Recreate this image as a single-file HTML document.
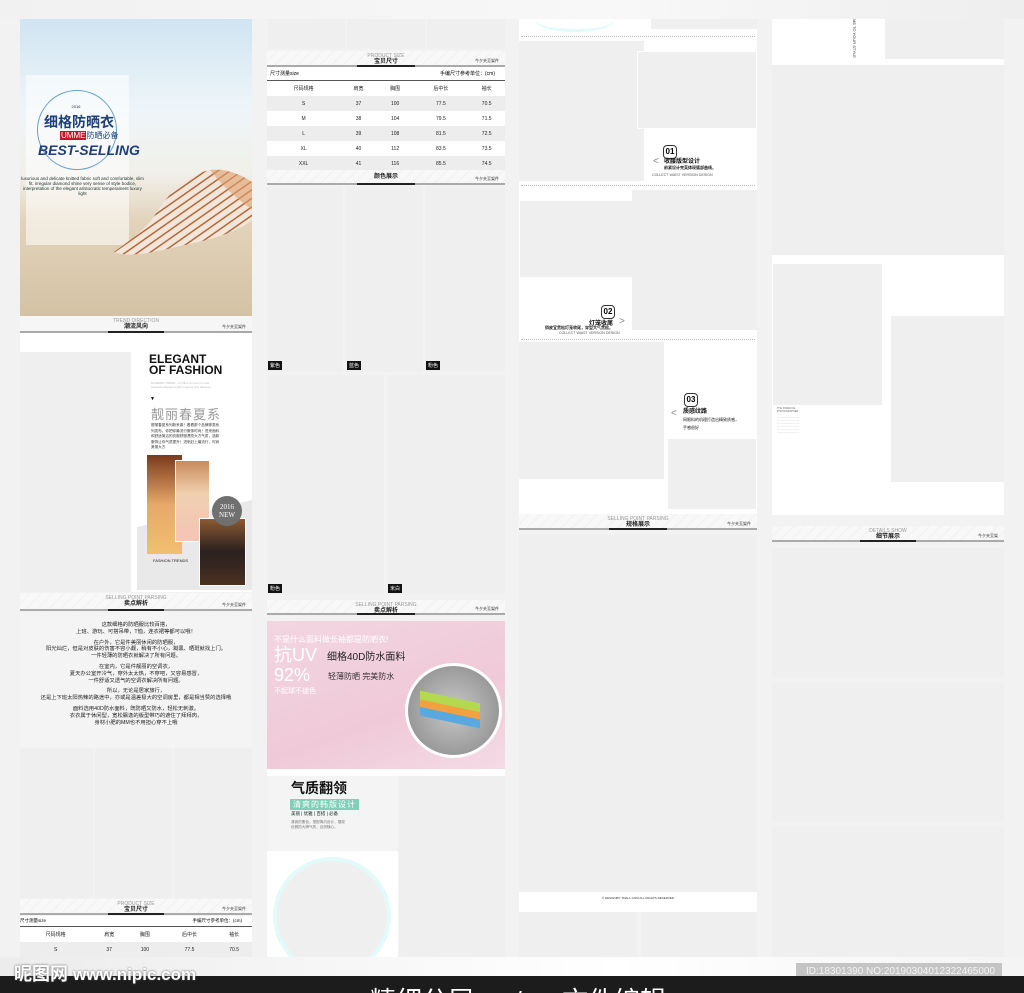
<!DOCTYPE html>
<html><head><meta charset="utf-8"><style>
*{margin:0;padding:0;box-sizing:border-box}
body{width:1024px;height:993px;overflow:hidden;background:#f2f2f2;font-family:"Liberation Sans","Noto Sans CJK SC",sans-serif;position:relative}
.a{position:absolute}
.g{position:absolute;background:#efefef}
.w{position:absolute;background:#fff}
.hd{position:absolute;height:16px;background:repeating-linear-gradient(135deg,#f8f8f8 0 7px,#f1f1f1 7px 8px);border-bottom:2px solid #aaa;text-align:center;font-size:5px;color:#999;line-height:6px;padding-top:2px}
.hd b{display:block;color:#222;font-size:6px;line-height:7px}
.hd i{position:absolute;bottom:-2px;left:38%;width:24%;height:2px;background:#222}
.hd s{position:absolute;right:6px;bottom:1px;font-size:4px;color:#333;text-decoration:none}
table{border-collapse:collapse;width:100%;font-size:5px;color:#222}
td{text-align:center;height:15px}
tr.s td{background:#ededed}
.lab{position:absolute;bottom:2px;left:1px;background:#111;color:#fff;font-size:5px;padding:1px 2px}
.dot{position:absolute;border-top:1px dotted #bbb;height:0}
.hex{font-size:8px;font-weight:bold;border:1px solid #333;border-radius:4px;width:14px;height:14px;text-align:center;line-height:12px}
</style></head><body>
<div class="a" style="left:0;top:0;width:1024px;height:19px;background:linear-gradient(90deg,#f1f1f1,#f8f8f8 60%,#eee)"></div>

<!-- COL 1 -->
<div class="a" style="left:20px;top:19px;width:232px;height:297px;background:linear-gradient(180deg,#cfe4f1 0%,#eef5f9 30%,#f1f0ea 52%,#e2d3bb 68%,#d4c2a4 100%)"></div>
<div class="a" style="left:26px;top:75px;width:103px;height:170px;background:rgba(255,255,255,.55)"></div>
<div class="a" style="left:37px;top:90px;width:80px;height:80px;border:1px solid #6aa0cc;border-radius:50%"></div>
<div class="a" style="left:20px;top:104px;width:112px;text-align:center;font-size:4px;color:#234">2016</div>
<div class="a" style="left:44px;top:112px;font-size:14px;color:#1d3f7a;font-weight:bold">细格防晒衣</div>
<div class="a" style="left:60px;top:130px;font-size:8px;color:#1d3f7a"><span style="background:#c01826;color:#fff;padding:0 1px">UMME</span>防晒必备</div>
<div class="a" style="left:38px;top:142px;font-size:14px;color:#1d3f7a;font-style:italic;font-weight:bold">BEST-SELLING</div>
<div class="a" style="left:20px;top:176px;width:125px;font-size:4.5px;color:#233;line-height:5px;text-align:center">luxurious and delicate knitted fabric soft and comfortable, slim fit, irregular diamond shine very sense of style bodice, interpretation of the elegant aristocratic temperament luxury light</div>
<svg class="a" style="left:110px;top:160px" width="142" height="100" viewBox="0 0 142 100">
<defs><pattern id="st" width="7" height="7" patternUnits="userSpaceOnUse" patternTransform="rotate(55)"><rect width="7" height="7" fill="#f3e6d8"/><rect width="1.5" height="7" fill="#b0683e"/></pattern></defs>
<path d="M4 92 C20 80 35 70 45 55 C60 30 80 14 100 10 C115 8 130 14 142 22 L142 60 C128 72 100 80 70 86 C45 92 20 98 4 92 Z" fill="url(#st)"/>
<path d="M100 10 C115 8 130 14 142 22 L142 50 C130 40 115 30 100 10Z" fill="#e0a070" opacity=".6"/>
</svg>
<div class="hd" style="left:20px;top:316px;width:232px;height:17px;background:#f6f6f6">TREND DIRECTION<b>潮流风向</b><i></i><s>今夕夫至架件</s></div>
<div class="w" style="left:20px;top:333px;width:232px;height:19px"></div>
<div class="w" style="left:20px;top:352px;width:232px;height:240px"></div>
<div class="g" style="left:20px;top:352px;width:111px;height:240px"></div>
<div class="a" style="left:149px;top:354px;font-size:12px;font-weight:bold;line-height:11px;color:#111">ELEGANT<br>OF FASHION</div>
<div class="a" style="left:151px;top:381px;width:70px;font-size:3px;color:#bbb;line-height:4px">MODERN TREND · A Office for men of new products designed with superior fine tailoring</div>
<div class="a" style="left:150px;top:396px;font-size:5px">▼</div>
<div class="a" style="left:151px;top:404px;font-size:13px;color:#999;letter-spacing:1px">靓丽春夏系</div>
<div class="a" style="left:151px;top:423px;width:70px;font-size:3.6px;color:#333;line-height:5.5px">靓丽春夏系列新来袭！看看那个品牌那类系列发布。你把你最流行服饰时尚！进来面料和舒适简洁的衣服舒服漂亮大方气质，选款服饰让你气质提升！进来赶上最流行，时尚美丽大方</div>
<div class="a" style="left:137px;top:500px;width:115px;height:90px;background:#e9e9e9;clip-path:polygon(0 30%,100% 0,100% 100%,0 100%)"></div>
<div class="a" style="left:147px;top:455px;width:35px;height:99px;background:linear-gradient(180deg,#7a3a1c,#e8a86a 50%,#f0c070)"></div>
<div class="a" style="left:175px;top:460px;width:35px;height:82px;background:linear-gradient(180deg,#c88a5a,#f0d0b0 40%,#f4c4b4);border:1px solid #fff"></div>
<div class="a" style="left:199px;top:518px;width:47px;height:68px;background:linear-gradient(180deg,#8a5a30,#2a2020 50%,#4a3020);border:1px solid #fff"></div>
<div class="a" style="left:212px;top:496px;width:30px;height:30px;border-radius:50%;background:#707070;color:#fff;font-size:7px;text-align:center;line-height:8px;padding-top:7px;font-family:'Liberation Serif',serif">2016<br>NEW</div>
<div class="a" style="left:153px;top:558px;font-size:4px;color:#222">FASHION TRENDS</div>
<div class="hd" style="left:20px;top:593px;width:232px;height:18px">SELLING POINT PARSING<b>卖点解析</b><i></i><s>今夕夫至架件</s></div>
<div class="a" style="left:20px;top:612px;width:232px;height:135px;background:#f4f4f4;font-size:5.3px;text-align:center;line-height:6.8px;color:#222;padding-top:10px">这款细格的防晒服比较百搭，<br>上班、游玩、可搭吊带，T恤，连衣裙等都可以哦！<div style="height:4px"></div>在户外，它是件美丽休闲的防晒服，<br>阳光灿烂，但是对皮肤的伤害不容小觑，稍有不小心，黝黑、晒斑就找上门。<br>一件轻薄的防晒衣就解决了所有问题。<div style="height:4px"></div>在室内，它是件靓丽的空调衣，<br>夏天办公室开冷气，穿外太太热，不穿吧，又容易感冒，<br>一件舒适又透气的空调衣解决所有问题。<div style="height:4px"></div>所以，无论是居家旅行，<br>还是上下班太阳热辣的路途中，亦或是温差极大的空调房里，都是相当赞的选择哦<div style="height:4px"></div>面料选用40D防水面料，既防晒又防水，轻松无刺激。<br>衣衣属于休闲型，宽松飘逸的版型带巧的遮住了拜拜肉，<br>身材小肥的MM也不用担心穿不上哦</div>
<div class="g" style="left:20px;top:748px;width:73px;height:150px"></div>
<div class="g" style="left:95px;top:748px;width:77px;height:150px"></div>
<div class="g" style="left:174px;top:748px;width:78px;height:150px"></div>
<div class="hd" style="left:20px;top:899px;width:232px;height:16px">PRODUCT SIZE<b>宝贝尺寸</b><i></i><s>今夕夫至架件</s></div>
<div class="w" style="left:20px;top:916px;width:232px;height:41px;font-size:4.5px">
<div style="display:flex;justify-content:space-between;padding:2px 10px 0 0;height:11px;border-bottom:1px solid #555">尺寸测量size<span>手编尺寸参考单位：(cm)</span></div>
<table><tr><td>尺码规格</td><td>肩宽</td><td>胸围</td><td>后中长</td><td>袖长</td></tr><tr class="s"><td>S</td><td>37</td><td>100</td><td>77.5</td><td>70.5</td></tr></table></div>

<!-- COL 2 -->
<div class="g" style="left:268px;top:19px;width:77px;height:30px"></div>
<div class="g" style="left:347px;top:19px;width:78px;height:30px"></div>
<div class="g" style="left:427px;top:19px;width:78px;height:30px"></div>
<div class="hd" style="left:267px;top:51px;width:238px;height:16px">PRODUCT SIZE<b>宝贝尺寸</b><i></i><s>今夕夫至架件</s></div>
<div class="w" style="left:267px;top:67px;width:238px;height:103px;font-size:5px">
<div style="display:flex;justify-content:space-between;padding:3px 10px 0 3px;height:14px;border-bottom:1px solid #555">尺寸测量size<span>手编尺寸参考单位：(cm)</span></div>
<table><tr><td>尺码规格</td><td>肩宽</td><td>胸围</td><td>后中长</td><td>袖长</td></tr>
<tr class="s"><td>S</td><td>37</td><td>100</td><td>77.5</td><td>70.5</td></tr>
<tr><td>M</td><td>38</td><td>104</td><td>79.5</td><td>71.5</td></tr>
<tr class="s"><td>L</td><td>39</td><td>108</td><td>81.5</td><td>72.5</td></tr>
<tr><td>XL</td><td>40</td><td>112</td><td>83.5</td><td>73.5</td></tr>
<tr class="s"><td>XXL</td><td>41</td><td>116</td><td>85.5</td><td>74.5</td></tr></table>
<div style="text-align:right;padding:3px 3px 0;font-size:4px;font-weight:bold">温馨提示：手编手工测量，因测量方式不同，可能会存在1-3cm误差属正常现象！</div></div>
<div class="hd" style="left:267px;top:170px;width:238px;height:15px;padding-top:4px"><b>颜色展示</b><i></i><s>今夕夫至架件</s></div>
<div class="g" style="left:267px;top:187px;width:76px;height:185px"><span class="lab">紫色</span></div>
<div class="g" style="left:346px;top:187px;width:77px;height:185px"><span class="lab">蓝色</span></div>
<div class="g" style="left:425px;top:187px;width:80px;height:185px"><span class="lab">粉色</span></div>
<div class="g" style="left:267px;top:375px;width:117px;height:220px"><span class="lab">粉色</span></div>
<div class="g" style="left:387px;top:375px;width:118px;height:220px"><span class="lab">米白</span></div>
<div class="hd" style="left:267px;top:600px;width:238px;height:15px">SELLING POINT PARSING<b>卖点解析</b><i></i><s>今夕夫至架件</s></div>
<div class="a" style="left:267px;top:621px;width:238px;height:148px;background:linear-gradient(160deg,#f3d6e2,#efc9d7 60%,#f4dbe5)"></div>
<div class="a" style="left:274px;top:634px;font-size:8px;color:#fff">不是什么面料做长袖都是防晒衣!</div>
<div class="a" style="left:274px;top:645px;font-size:18px;color:#fff;line-height:20px">抗UV<br>92%</div>
<div class="a" style="left:274px;top:686px;font-size:7px;color:#fff">不起球不褪色</div>
<div class="a" style="left:327px;top:648px;font-size:10px;color:#222">细格40D防水面料</div>
<div class="a" style="left:328px;top:671px;font-size:8px;color:#333">轻薄防晒 完美防水</div>
<div class="a" style="left:405px;top:663px;width:97px;height:95px;border-radius:50%;background:radial-gradient(circle,#c8c8c8,#9a9a9a 70%);border:3px solid #fff"></div>
<div class="a" style="left:420px;top:697px;width:60px;height:25px;background:linear-gradient(180deg,#b4d850 0 35%,#f2a040 35% 65%,#5aa8e0 65%);transform:skewY(12deg)"></div>
<div class="w" style="left:267px;top:769px;width:238px;height:7px"></div>
<div class="a" style="left:268px;top:776px;width:130px;height:75px;background:#f4f4f4"></div>
<div class="a" style="left:291px;top:778px;font-size:14px;font-weight:bold;color:#111">气质翻领</div>
<div class="a" style="left:290px;top:799px;font-size:8px;color:#fff;background:#7fd0b8;padding:0 3px;letter-spacing:1px">清爽的韩版设计</div>
<div class="a" style="left:291px;top:811px;font-size:4.5px;color:#222">美丽 | 优雅 | 百搭 | 必备</div>
<div class="a" style="left:291px;top:820px;font-size:3.6px;color:#777;line-height:5px">清爽的素色，搭配简约设计，展现<br>优雅的大牌气质，自然随心。</div>
<div class="w" style="left:267px;top:851px;width:131px;height:106px;overflow:hidden"><div style="position:absolute;left:6px;top:6px;width:118px;height:118px;border-radius:50%;border:4px solid #e2fafa;background:#efefef"></div></div>
<div class="g" style="left:399px;top:776px;width:106px;height:181px"></div>

<!-- COL 3 -->
<div class="w" style="left:519px;top:19px;width:238px;height:495px"></div>
<div class="a" style="left:535px;top:8px;width:80px;height:24px;border-radius:50%;border-bottom:3px solid #e2fafa"></div>
<div class="g" style="left:651px;top:19px;width:106px;height:10px"></div>
<div class="dot" style="left:521px;top:36px;width:234px"></div>
<div class="g" style="left:519px;top:41px;width:125px;height:140px"></div>
<div class="g" style="left:637px;top:51px;width:120px;height:78px;border:1px solid #fff"></div>
<div class="a" style="left:663px;top:145px" ><div class="hex">01</div></div>
<div class="a" style="left:653px;top:156px;font-size:10px;color:#888">&lt;</div>
<div class="a" style="left:664px;top:159px;font-size:6px;font-weight:bold;color:#111;line-height:6px">收腰版型设计<br><span style="font-size:4px">前紧设计完美体现腰部曲线。</span></div>
<div class="a" style="left:652px;top:173px;font-size:3.6px;color:#555">COLLECT WAIST VERSION DESIGN</div>
<div class="dot" style="left:521px;top:185px;width:234px"></div>
<div class="g" style="left:519px;top:200px;width:119px;height:78px;border:1px solid #fff"></div>
<div class="g" style="left:632px;top:190px;width:125px;height:140px"></div>
<div class="a" style="left:601px;top:305px"><div class="hex">02</div></div>
<div class="a" style="left:589px;top:318px;font-size:6px;font-weight:bold;color:#111">灯笼收尾</div>
<div class="a" style="left:545px;top:325px;font-size:4px;font-weight:bold;color:#111">俏皮宜贯松灯笼收尾，穿型大气贯松。</div>
<div class="a" style="left:559px;top:331px;font-size:3.6px;color:#555">COLLECT WAIST VERSION DESIGN</div>
<div class="a" style="left:619px;top:316px;font-size:10px;color:#888">&gt;</div>
<div class="dot" style="left:521px;top:339px;width:234px"></div>
<div class="g" style="left:519px;top:342px;width:145px;height:137px"></div>
<div class="a" style="left:684px;top:393px"><div class="hex">03</div></div>
<div class="a" style="left:671px;top:408px;font-size:10px;color:#888">&lt;</div>
<div class="a" style="left:683px;top:409px;font-size:6px;font-weight:bold;color:#111;line-height:7px">质感纹路<br><span style="font-size:4px;font-weight:normal">网眼料的机理打造出精致质感，<br>手感很好</span></div>
<div class="g" style="left:668px;top:439px;width:88px;height:70px"></div>
<div class="hd" style="left:519px;top:514px;width:238px;height:16px">SELLING POINT PARSING<b>规格展示</b><i></i><s>今夕夫至架件</s></div>
<div class="g" style="left:519px;top:535px;width:238px;height:357px"></div>
<div class="w" style="left:519px;top:892px;width:238px;height:20px;font-size:3px;text-align:center;padding-top:4px;color:#333">© DESIGNBY TMALL.COM ALL RIGHTS RESERVED</div>
<div class="g" style="left:519px;top:912px;width:118px;height:45px"></div>
<div class="g" style="left:641px;top:912px;width:116px;height:45px"></div>

<!-- COL 4 -->
<div class="w" style="left:772px;top:19px;width:232px;height:51px"></div>
<div class="a" style="left:852px;top:19px;width:5px;height:40px;font-size:4px;writing-mode:vertical-rl;color:#333">ME TO YOUR STYLE</div>
<div class="g" style="left:885px;top:19px;width:119px;height:40px"></div>
<div class="g" style="left:772px;top:65px;width:232px;height:190px"></div>
<div class="w" style="left:772px;top:255px;width:232px;height:260px"></div>
<div class="g" style="left:773px;top:264px;width:109px;height:141px"></div>
<div class="a" style="left:777px;top:407px;font-size:2.5px;color:#666;line-height:3px;width:40px">THE FINANCIAL PHOTOGRAPHER<br><br>................................<br>................................<br>................................<br>................................<br>................................<br>................................</div>
<div class="g" style="left:891px;top:316px;width:113px;height:166px"></div>
<div class="hd" style="left:772px;top:526px;width:232px;height:16px">DETAILS SHOW<b>细节展示</b><i></i><s>今夕夫至架</s></div>
<div class="g" style="left:772px;top:548px;width:232px;height:129px"></div>
<div class="g" style="left:772px;top:683px;width:232px;height:138px"></div>
<div class="g" style="left:772px;top:827px;width:232px;height:130px"></div>

<!-- footer -->
<div class="a" style="left:0;top:957px;width:1024px;height:19px;background:linear-gradient(90deg,#ececec,#fff 60%,#f4f4f4)"></div>
<div class="a" style="left:796px;top:963px;width:206px;height:20px;background:#c4c4c4;color:#f4f4f4;font-size:10px;padding:3px 0 0 10px;white-space:nowrap">ID:18301390 NO:20190304012322465000</div>
<div class="a" style="left:0;top:976px;width:1024px;height:17px;background:#1c1c1c;overflow:hidden"><div style="position:absolute;left:370px;top:10px;font-size:26px;line-height:30px;color:#fff;white-space:nowrap">精细分层 — / — 文件编辑</div></div>
<div class="a" style="left:14px;top:960px;font-size:18px;font-weight:bold;color:#fff;text-shadow:0 0 2px #555;white-space:nowrap">昵图网 <span style="font-size:17px">www.nipic.com</span></div>
</body></html>
